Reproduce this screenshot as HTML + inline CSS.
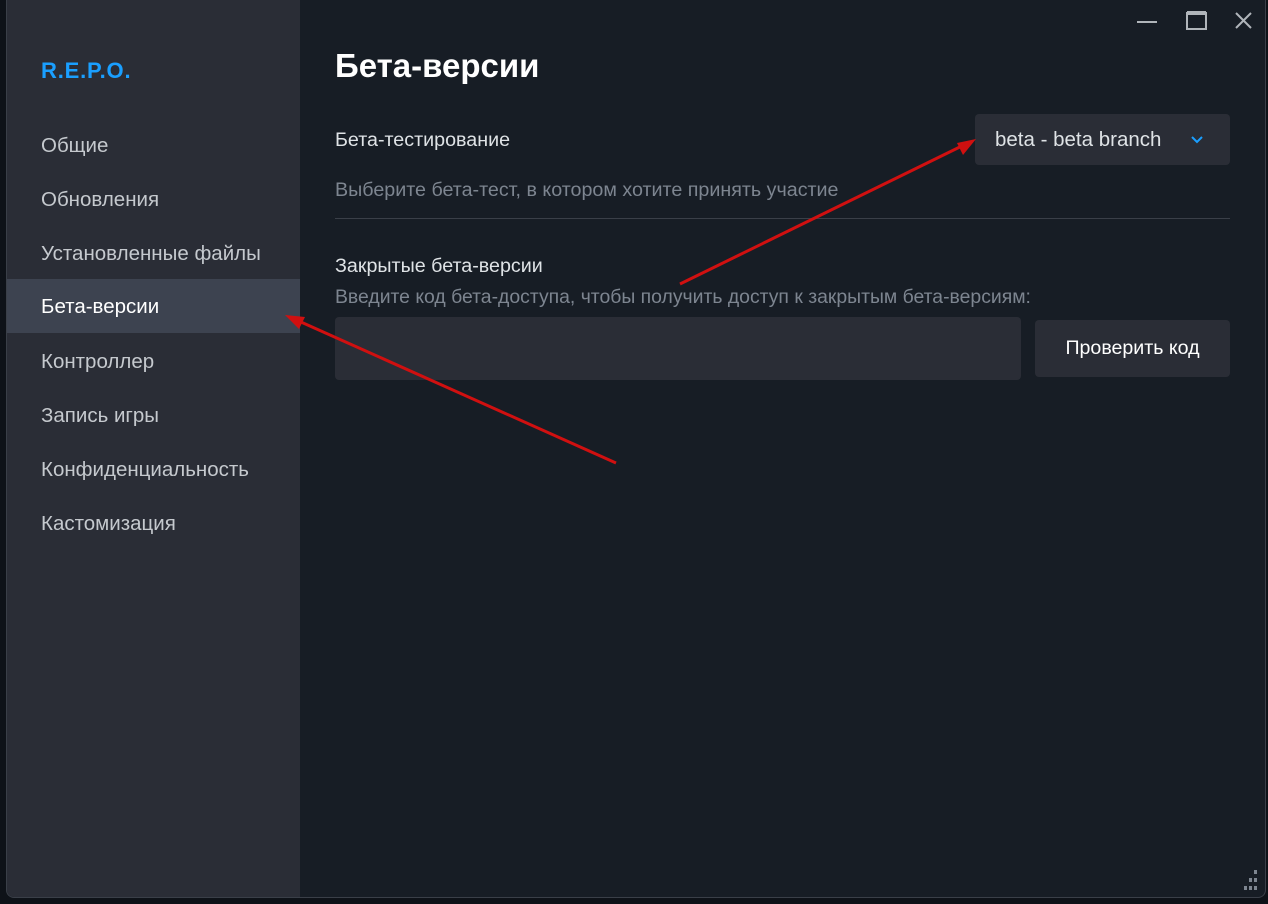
<!DOCTYPE html>
<html><head><meta charset="utf-8"><style>
*{margin:0;padding:0;box-sizing:border-box}
body{width:1268px;height:904px;background:#0e1218;font-family:"Liberation Sans","DejaVu Sans",sans-serif;position:relative;overflow:hidden}
.win{position:absolute;left:6px;top:0;width:1260px;height:898px;background:#171d25;border:1px solid #3a3f48;border-top:none;border-radius:0 0 8px 8px;overflow:hidden}
.side{position:absolute;left:0;top:0;width:293px;height:100%;background:#2a2d36}
.logo{position:absolute;left:34px;top:58px;color:#1a9fff;font-weight:bold;font-size:22px;letter-spacing:0.8px}
.item{position:absolute;left:0;width:293px;height:54px;line-height:56px;padding-left:34px;color:#c5c9ce;font-size:20.5px}
.sel{background:#3d4350;color:#fff}
.t{position:absolute;color:#dfe3e6;white-space:nowrap}
</style></head><body>
<div class="win">
<div class="side">
<div class="logo">R.E.P.O.</div>
<div class="item" style="top:118px">Общие</div>
<div class="item" style="top:172px">Обновления</div>
<div class="item" style="top:226px">Установленные файлы</div>
<div class="item sel" style="top:279px">Бета-версии</div>
<div class="item" style="top:334px">Контроллер</div>
<div class="item" style="top:388px">Запись игры</div>
<div class="item" style="top:442px">Конфиденциальность</div>
<div class="item" style="top:496px">Кастомизация</div>
</div>
<div class="t" style="left:328px;top:47px;font-size:33px;font-weight:bold;color:#fff">Бета-версии</div>
<div class="t" style="left:328px;top:129px;font-size:19.7px">Бета-тестирование</div>
<div style="position:absolute;left:968px;top:114px;width:255px;height:51px;background:#2a2d36;border-radius:4px;color:#dfe3e6;font-size:20.5px;line-height:51px;padding-left:20px;white-space:nowrap">beta - beta branch
<svg style="position:absolute;left:215px;top:21px" width="14" height="10" viewBox="0 0 14 10"><path d="M2 2L7 7L12 2" stroke="#1a9fff" stroke-width="2" fill="none"/></svg></div>
<div class="t" style="left:328px;top:179px;font-size:19.7px;color:#7d8590">Выберите бета-тест, в котором хотите принять участие</div>
<div style="position:absolute;left:328px;top:218px;width:895px;height:1px;background:#3a3f48"></div>
<div class="t" style="left:328px;top:255px;font-size:19.7px">Закрытые бета-версии</div>
<div class="t" style="left:328px;top:286px;font-size:19.4px;color:#7d8590">Введите код бета-доступа, чтобы получить доступ к закрытым бета-версиям:</div>
<div style="position:absolute;left:328px;top:317px;width:686px;height:63px;background:#2a2d36;border-radius:4px"></div>
<div style="position:absolute;left:1028px;top:320px;width:195px;height:57px;background:#2a2d36;border-radius:4px;color:#fff;font-size:19.6px;line-height:57px;text-align:center">Проверить код</div>
<svg style="position:absolute;left:1120px;top:10px" width="135" height="24"><path d="M10 12H30" stroke="#b0b5ba" stroke-width="2"/><rect x="60" y="3" width="19" height="16" fill="none" stroke="#b0b5ba" stroke-width="2"/><path d="M60 3H79" stroke="#b0b5ba" stroke-width="4"/><path d="M109 3L124 18M124 3L109 18" stroke="#b0b5ba" stroke-width="2"/></svg>
<svg style="position:absolute;left:1230px;top:868px" width="24" height="24"><g fill="#7d8590"><rect x="17" y="2" width="3" height="4"/><rect x="12" y="10" width="3" height="4"/><rect x="17" y="10" width="3" height="4"/><rect x="7" y="18" width="3" height="4"/><rect x="12" y="18" width="3" height="4"/><rect x="17" y="18" width="3" height="4"/></g></svg>
</div>
<svg style="position:absolute;left:0;top:0" width="1268" height="904"><g stroke="#d01010" stroke-width="3" fill="none"><path d="M616 463L292 318"/><path d="M680 284L970 142"/></g><g fill="#d01010"><path d="M285 315L305 317L299 329Z"/><path d="M976 139L957 143L963 155Z"/></g></svg>
</body></html>
